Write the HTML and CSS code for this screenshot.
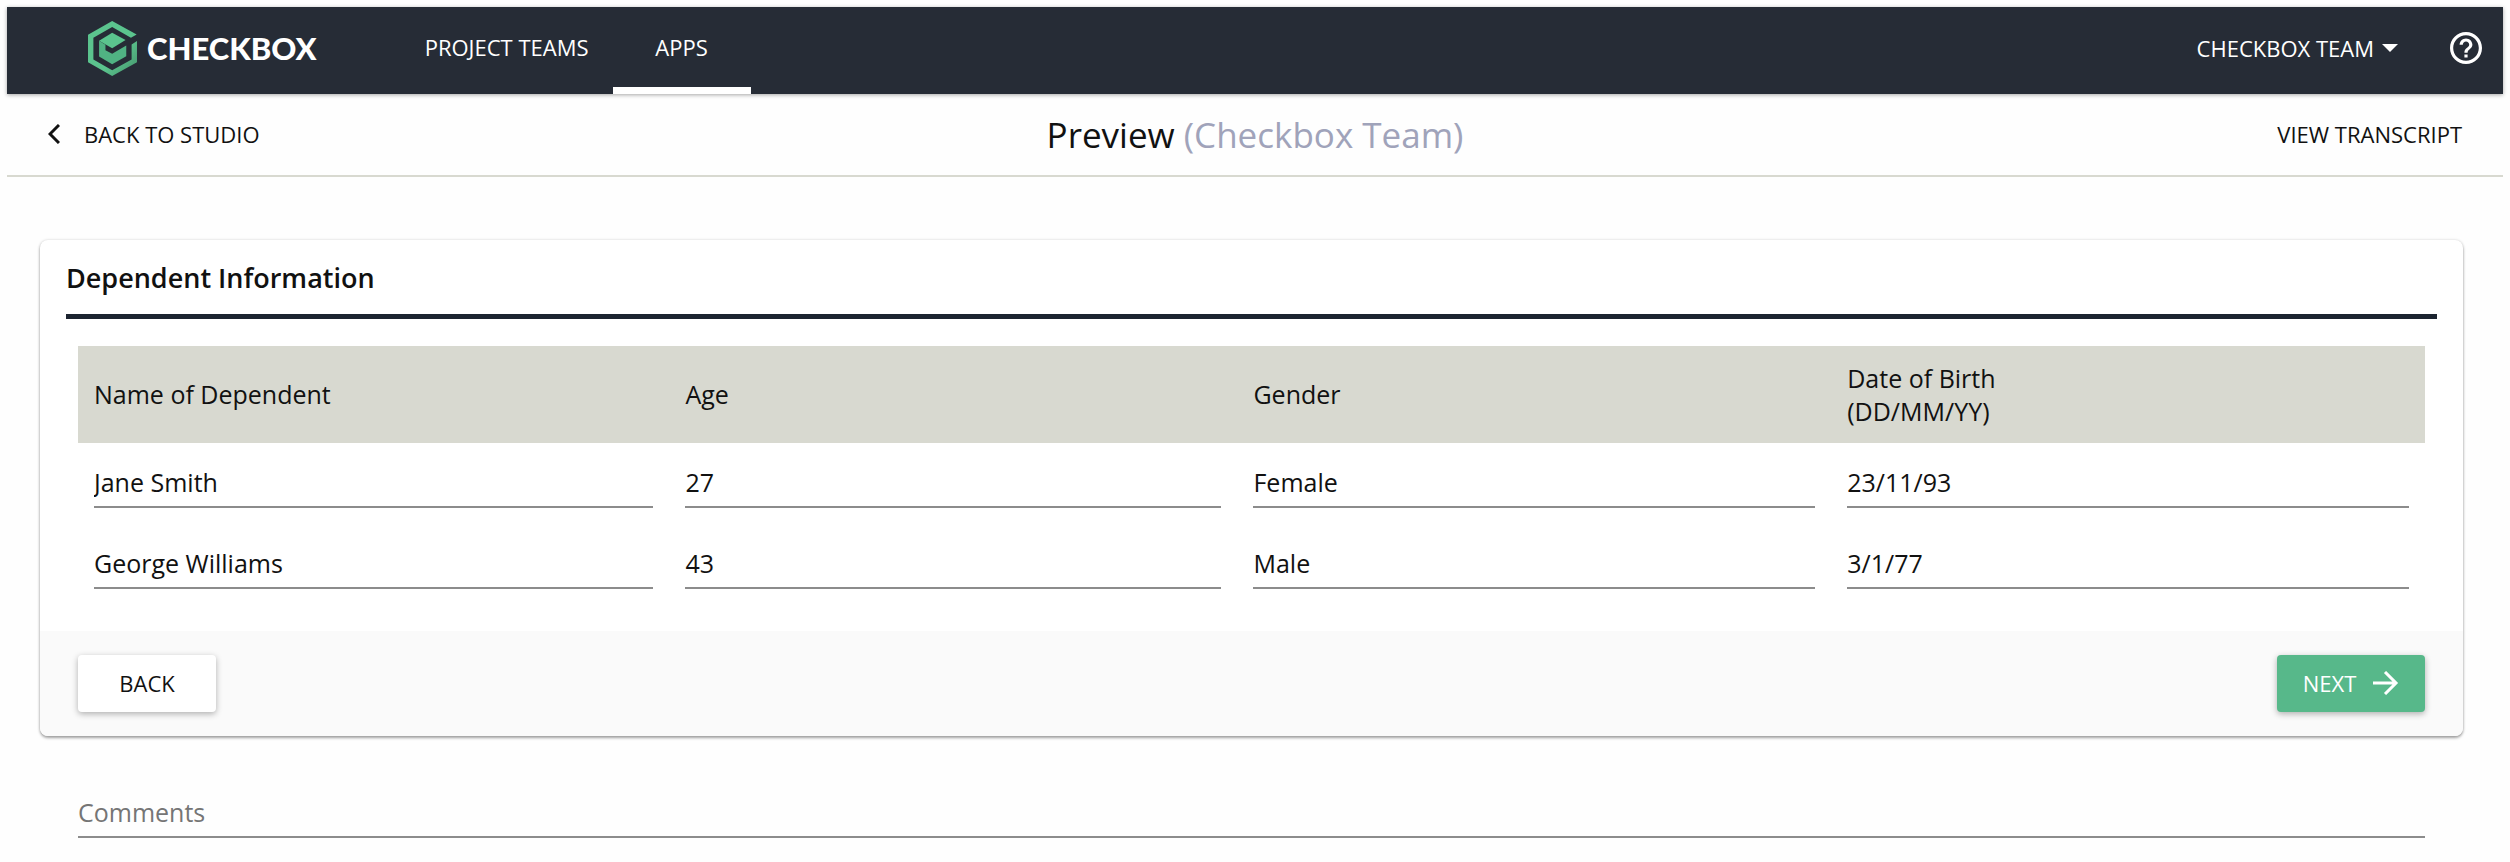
FILE: index.html
```
<!DOCTYPE html>
<html lang="en">

<head>
	<meta charset="UTF-8">
	<title>Checkbox</title>
	<link rel="stylesheet" href="styles.css">
</head>

<body>
	<header class="navbar">
		<a class="logo" href="#">
			<svg class="logo-mark" viewBox="0 0 146 164" aria-hidden="true">
				<defs>
					<linearGradient id="green" x1="0" y1="0" x2="1" y2="1">
						<stop offset="0.6" stop-color="#5bc48e" />
						<stop offset="1" stop-color="#44936b" />
					</linearGradient>
				</defs>
				<path fill="url(#green)" d="M72 0L145 40L128 50L72 18L16 50V115L72 147L130 115V70L146 60V123L72 164L0 123V41Z" />
				<path fill="#5bc48e" d="M72 35L112 57L72 81L33 59Z" />
				<path fill="#50b283" d="M33 59L52 71V87L72 98L114 73V105L72 129L33 106Z" />
			</svg>
			<span class="logo-text">CHECKBOX</span>
		</a>
		<nav class="tabs">
			<a class="tab" href="#">PROJECT TEAMS</a>
			<a class="tab active" href="#">APPS</a>
		</nav>
		<button class="team-menu" type="button">
			CHECKBOX TEAM
			<svg class="caret" viewBox="0 0 16 8" aria-hidden="true"><path fill="currentColor" d="M0 0H16L8 8Z" /></svg>
		</button>
		<button class="help" type="button" aria-label="Help">
			<svg class="help-icon" viewBox="2 2 20 20" aria-hidden="true">
				<path fill="currentColor" d="M11 18h2v-2h-2v2zm1-16C6.480 2 2 6.480 2 12s4.480 10 10 10 10-4.480 10-10S17.520 2 12 2zm0 18c-4.410 0-8-3.590-8-8s3.590-8 8-8 8 3.590 8 8-3.590 8-8 8zm0-14c-2.210 0-4 1.790-4 4h2c0-1.100.9-2 2-2s2 .9 2 2c0 2-3 1.750-3 5h2c0-2.250 3-2.500 3-5 0-2.210-1.790-4-4-4z" />
			</svg>
		</button>
	</header>

	<div class="toolbar">
		<a class="back-link" href="#">
			<svg class="chevron" viewBox="0 0 12 20" aria-hidden="true"><path fill="none" stroke="currentColor" stroke-width="3" d="M11 1L2 10L11 19" /></svg>
			BACK TO STUDIO
		</a>
		<h1 class="page-title">Preview <span class="team">(Checkbox Team)</span></h1>
		<a class="transcript" href="#">VIEW TRANSCRIPT</a>
	</div>

	<main class="content">
		<form class="card">
			<div class="card-body">
				<h2 class="card-title">Dependent Information</h2>
				<table class="dependents">
					<colgroup>
						<col class="col-name">
						<col class="col-age">
						<col class="col-gender">
						<col class="col-dob">
					</colgroup>
					<thead>
						<tr>
							<th>Name of Dependent</th>
							<th>Age</th>
							<th>Gender</th>
							<th>Date of Birth<br>(DD/MM/YY)</th>
						</tr>
					</thead>
					<tbody>
						<tr>
							<td><input type="text" aria-label="Name of Dependent" value="Jane Smith"></td>
							<td><input type="text" aria-label="Age" value="27"></td>
							<td><input type="text" aria-label="Gender" value="Female"></td>
							<td><input type="text" aria-label="Date of Birth" value="23/11/93"></td>
						</tr>
						<tr>
							<td><input type="text" aria-label="Name of Dependent" value="George Williams"></td>
							<td><input type="text" aria-label="Age" value="43"></td>
							<td><input type="text" aria-label="Gender" value="Male"></td>
							<td><input type="text" aria-label="Date of Birth" value="3/1/77"></td>
						</tr>
					</tbody>
				</table>
			</div>
			<div class="card-footer">
				<button class="btn btn-back" type="button">BACK</button>
				<button class="btn btn-next" type="submit">
					NEXT
					<svg class="arrow" viewBox="0 0 26 24" aria-hidden="true"><path fill="none" stroke="currentColor" stroke-width="3" d="M0 12H23M12 1L23 12L12 23" /></svg>
				</button>
			</div>
		</form>
		<div class="comments">
			<input type="text" aria-label="Comments" placeholder="Comments">
		</div>
	</main>
</body>

</html>
```

FILE: styles.css
```
* {
	box-sizing: border-box;
}
body {
	margin: 0;
	padding: 7px;
	background-color: #fefefe;
	font-family: "Open Sans", sans-serif;
	font-size: 25px;
	color: #111;
}
a {
	color: inherit;
	text-decoration: none;
}
button,
input {
	font: inherit;
	color: inherit;
	border: 0;
	padding: 0;
	background: none;
}
button {
	cursor: pointer;
}
svg {
	display: block;
}

/* top bar */
.navbar {
	display: flex;
	align-items: center;
	height: 87px;
	padding: 0 21px 5px 81px;
	background-color: #262c36;
	color: #fff;
	font-size: 22px;
	box-shadow: 0 1px 4px rgba(0, 0, 0, 0.35);
}
.logo {
	display: flex;
	align-items: center;
	gap: 10px;
}
.logo-mark {
	width: 49px;
	height: 55px;
}
.logo-text {
	font-family: Lato, sans-serif;
	font-size: 31px;
	font-weight: 900;
	line-height: 36px;
}
.tabs {
	display: flex;
	align-self: stretch;
	margin: 0 0 -5px 84px;
}
.tab {
	display: flex;
	align-items: center;
	justify-content: center;
	min-width: 138px;
	padding: 0 24px;
	border-bottom: 7px solid transparent;
}
.tab.active {
	border-bottom-color: #fff;
}
.team-menu {
	display: flex;
	align-items: center;
	gap: 8px;
	margin-left: auto;
}
.caret {
	width: 16px;
	height: 8px;
}
.help {
	margin-left: 52px;
}
.help-icon {
	width: 32px;
	height: 32px;
}

/* sub header */
.toolbar {
	display: grid;
	grid-template-columns: 1fr auto 1fr;
	align-items: center;
	height: 83px;
	padding: 0 41px;
	border-bottom: 2px solid #d8d9d0;
	font-size: 22px;
}
.back-link {
	display: flex;
	align-items: center;
	gap: 24px;
}
.back-link,
.transcript {
	padding-bottom: 2px;
}
.chevron {
	width: 12px;
	height: 20px;
}
.page-title {
	margin: 0;
	font-size: 35px;
	font-weight: 400;
}
.team {
	color: #a0a3ba;
}
.transcript {
	justify-self: end;
}

.content {
	padding: 63px 40px 0 33px;
}

/* card */
.card {
	border-radius: 8px;
	background-color: #fff;
	box-shadow: 0 2px 3px rgba(0, 0, 0, 0.35), 0 0 3px rgba(0, 0, 0, 0.15);
}
.card-body {
	padding: 0 26px 26px;
}
.card-title {
	margin: 0;
	padding: 20px 0 18px;
	border-bottom: 5px solid #1c2430;
	font-size: 27px;
	font-weight: 600;
	line-height: 36px;
}
.dependents {
	width: calc(100% - 24px);
	margin: 27px 12px 0;
	border-collapse: collapse;
	table-layout: fixed;
}
.col-name {
	width: 25.2%;
}
.col-gender,
.col-dob {
	width: 25.3%;
}
.dependents th {
	height: 97px;
	padding: 0 16px;
	background-color: #d8d9d0;
	font-weight: 400;
	line-height: 33px;
	text-align: left;
}
.dependents td {
	height: 81px;
	padding: 0 16px;
}
.dependents input,
.comments input {
	display: block;
	width: 100%;
	height: 49px;
	padding-bottom: 2px;
	border-bottom: 2px solid #8c8c8c;
	outline: 0;
}
.card-footer {
	display: flex;
	justify-content: space-between;
	padding: 24px 38px;
	border-radius: 0 0 8px 8px;
	background-color: #fafafa;
}
.btn {
	display: flex;
	align-items: center;
	justify-content: center;
	height: 57px;
	padding-bottom: 2px;
	border-radius: 4px;
	font-size: 22px;
	box-shadow: 0 2px 6px rgba(0, 0, 0, 0.3);
}
.btn-back {
	width: 138px;
	background-color: #fff;
}
.btn-next {
	gap: 17px;
	width: 148px;
	background-color: #57b88a;
	color: #fff;
}
.arrow {
	width: 26px;
	height: 24px;
}

.comments {
	padding: 53px 38px 24px;
}
.comments input::placeholder {
	color: #757575;
	opacity: 1;
}
```
